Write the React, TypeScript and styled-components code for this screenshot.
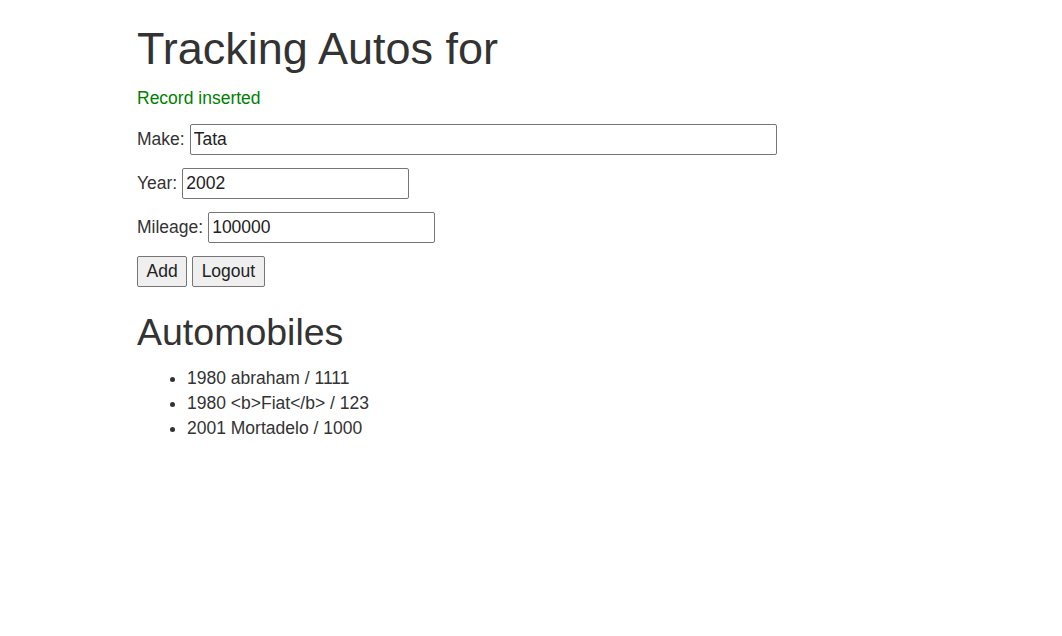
import React from "react";
import styled, { createGlobalStyle } from "styled-components";

const Global = createGlobalStyle`
  html, body { margin: 0; padding: 0; background: #fff; }
  body {
    font-family: "Liberation Sans", Arial, Helvetica, sans-serif;
    font-size: 17.5px;
    line-height: 1.42857;
    color: #333;
  }
`;

const Page = styled.div`
  padding: 0 137px;
`;

const Title = styled.h1`
  font-size: 45px;
  font-weight: 400;
  line-height: 1.1;
  margin: 24px 0 12.5px;
`;

const Flash = styled.p`
  color: #008000;
  margin: 0 0 13.5px;
`;

const Form = styled.form`
  margin: 0;
`;

const Row = styled.p`
  display: flex;
  align-items: baseline;
  gap: 5px;
  margin: 0 0 13px;
  min-height: 31px;
`;

const Field = styled.input<{ $w: number }>`
  box-sizing: border-box;
  width: ${(p) => p.$w}px;
  height: 31px;
  padding: 0 3px;
  border: 1px solid #767676;
  border-radius: 2px;
  font: inherit;
  color: #222;
  background: #fff;
`;

const Button = styled.button`
  box-sizing: border-box;
  height: 31px;
  padding: 0 8.5px;
  border: 1px solid #767676;
  border-radius: 2px;
  background: #efefef;
  font: inherit;
  color: #222;
`;

const Heading = styled.h2`
  font-size: 37.5px;
  font-weight: 400;
  line-height: 1.1;
  margin: 25px 0 12.5px;
`;

const List = styled.ul`
  margin: 0;
  padding-left: 50px;
`;

export default function App() {
  const autos = [
    "1980 abraham / 1111",
    "1980 <b>Fiat</b> / 123",
    "2001 Mortadelo / 1000",
  ];
  return (
    <>
      <Global />
      <Page>
        <Title>Tracking Autos for</Title>
        <Flash>Record inserted</Flash>
        <Form onSubmit={(e) => e.preventDefault()}>
          <Row>
            Make:
            <Field $w={587} defaultValue="Tata" />
          </Row>
          <Row>
            Year:
            <Field $w={227} defaultValue="2002" />
          </Row>
          <Row>
            Mileage:
            <Field $w={227} defaultValue="100000" />
          </Row>
          <Row>
            <Button type="submit">Add</Button>
            <Button type="button">Logout</Button>
          </Row>
        </Form>
        <Heading>Automobiles</Heading>
        <List>
          {autos.map((a) => (
            <li key={a}>{a}</li>
          ))}
        </List>
      </Page>
    </>
  );
}
